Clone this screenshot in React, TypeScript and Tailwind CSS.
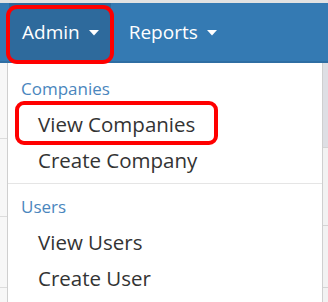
import React from 'react';

function Caret() {
  return (
    <svg width="10" height="6" viewBox="0 0 10 6" className="ml-[9px] mt-[2px]">
      <path d="M0 0 L10 0 L5 5.5 Z" fill="#ffffff" />
    </svg>
  );
}

export default function App() {
  const font = { fontFamily: '"Open Sans", "Noto Sans", sans-serif' };
  return (
    <div className="relative w-[328px] h-[302px] overflow-hidden bg-white" style={font}>
      <div className="h-[3px] bg-[#e2e2e2]" />
      <div className="flex h-[60px] items-stretch bg-[#347ab3] border-b-2 border-[#2f6ea3] text-[19px] text-white">
        <div className="ml-[9px] flex items-center bg-[#2e6a9c] pl-[13px] pr-[12px]">
          Admin
          <Caret />
        </div>
        <div className="ml-[6px] flex items-center pl-[12px]">
          Reports
          <Caret />
        </div>
      </div>

      {/* page behind the menu */}
      <div className="flex">
        <div className="w-[8px] h-[239px] bg-[#f7f7f7] flex flex-col">
          <div className="mt-[75px] h-[1px] bg-[#dcdcdc]" />
          <div className="mt-[77px] h-[1px] bg-[#dcdcdc]" />
          <div className="mt-[70px] h-[1px] bg-[#dcdcdc]" />
        </div>
        <div className="flex-1" />
        <div className="w-[6px] h-[239px] bg-[#f2f2f2] flex flex-col">
          <div className="h-[84px] bg-[#dedfe4]" />
          <div className="h-[1px] bg-[#d4d4d4]" />
          <div className="mt-[77px] h-[1px] bg-[#d4d4d4]" />
          <div className="mt-[61px] h-[1px] bg-[#d4d4d4]" />
        </div>
      </div>

      {/* dropdown */}
      <div className="absolute left-[7px] top-[63px] w-[316px] h-[260px] border-x border-[#cfcfcf] bg-white pt-[8px]">
        <div className="h-[35px] flex items-center pl-[13px] text-[17px] text-[#4a86bd]">Companies</div>
        <div className="h-[37px] flex items-center pl-[30px] text-[20.5px] text-[#333333]">View Companies</div>
        <div className="h-[35px] flex items-center pl-[30px] text-[20.5px] text-[#333333]">Create Company</div>
        <div className="mt-[5px] h-[1px] bg-[#e5e5e5]" />
        <div className="mt-[6px] h-[34px] flex items-center pl-[13px] text-[17px] text-[#4a86bd]">Users</div>
        <div className="h-[36px] flex items-center pl-[30px] text-[20.5px] text-[#333333]">View Users</div>
        <div className="h-[36px] flex items-center pl-[30px] text-[20.5px] text-[#333333]">Create User</div>
      </div>

      {/* annotation outlines */}
      <div className="absolute left-[6px] top-[5px] w-[108px] h-[59px] rounded-[11px] border-[4px] border-[#ff0000]" />
      <div className="absolute left-[15px] top-[101px] w-[203px] h-[44px] rounded-[9px] border-[4px] border-[#ff0000]" />
    </div>
  );
}
